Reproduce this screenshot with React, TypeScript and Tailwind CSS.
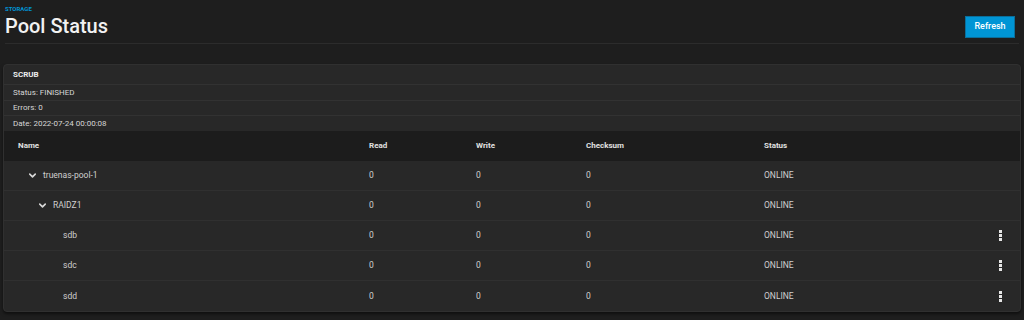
import { ChevronDown } from "lucide-react";

type Row = { name: string; level: number; expandable: boolean; actions: boolean };

const rows: Row[] = [
    { name: "truenas-pool-1", level: 0, expandable: true, actions: false },
    { name: "RAIDZ1", level: 1, expandable: true, actions: false },
    { name: "sdb", level: 2, expandable: false, actions: true },
    { name: "sdc", level: 2, expandable: false, actions: true },
    { name: "sdd", level: 2, expandable: false, actions: true },
];

const cols = "grid grid-cols-[351px_107px_110px_178px_1fr_40px] items-center";

function Kebab() {
    return (
        <div className="flex flex-col items-center gap-[1px]">
            <span className="w-[3px] h-[3px] bg-[#e6e6e6]" />
            <span className="w-[3px] h-[3px] bg-[#e6e6e6]" />
            <span className="w-[3px] h-[3px] bg-[#e6e6e6]" />
        </div>
    );
}

export default function App() {
    return (
        <div className="h-[320px] w-[1024px] bg-[#1e1e1e] overflow-hidden font-['Roboto',sans-serif] text-[#d0d0d0]">
            <div className="flex justify-between items-start px-[5px]">
                <div className="pt-[5px]">
                    <div className="text-[6px] font-bold uppercase text-[#0095d5] leading-[8px]">Storage</div>
                    <h1 className="text-[20px] font-medium text-[#f2f2f2] leading-[24px] mt-[1px]">Pool Status</h1>
                </div>
                <button className="mt-[16px] mr-[4px] w-[50px] h-[22px] bg-[#0095d5] text-white text-[9px] font-medium border border-[#0a6f9c]">
                    Refresh
                </button>
            </div>
            <div className="mx-[5px] mt-[5px] border-t border-[#2c2c2c]" />

            <div className="mx-[3px] mt-[20px] bg-[#282828] border border-[#303030] rounded-[4px] shadow-[0_2px_3px_rgba(0,0,0,0.5)] overflow-hidden">
                <div className="text-[8px] text-[#d6d6d6]">
                    <div className="h-[20px] flex items-center px-[9px] font-bold text-[#ededed] border-b border-[#323232]">SCRUB</div>
                    <div className="h-[16px] flex items-center px-[9px] border-b border-[#323232]">Status: FINISHED</div>
                    <div className="h-[15px] flex items-center px-[9px] border-b border-[#323232]">Errors: 0</div>
                    <div className="h-[15px] flex items-center px-[9px]">Date: 2022-07-24 00:00:08</div>
                </div>
                <div className={`${cols} h-[30px] bg-[#1c1c1c] pl-[14px] text-[8px] font-bold text-[#e0e0e0]`}>
                    <div>Name</div>
                    <div>Read</div>
                    <div>Write</div>
                    <div>Checksum</div>
                    <div>Status</div>
                    <div />
                </div>
                {rows.map((row, i) => (
                    <div
                        key={row.name}
                        className={`${cols} h-[30px] pl-[14px] text-[8.5px] ${i < rows.length - 1 ? "border-b border-[#303030]" : ""}`}
                    >
                        <div className="flex items-center" style={{ paddingLeft: 10 + row.level * 10 }}>
                            {row.expandable ? (
                                <ChevronDown size={11} strokeWidth={3.5} className="text-[#d8d8d8] -ml-[1px] mr-[5px]" />
                            ) : (
                                <span className="w-[15px]" />
                            )}
                            <span>{row.name}</span>
                        </div>
                        <div>0</div>
                        <div>0</div>
                        <div>0</div>
                        <div>ONLINE</div>
                        <div className="flex justify-center">{row.actions && <Kebab />}</div>
                    </div>
                ))}
            </div>
        </div>
    );
}
